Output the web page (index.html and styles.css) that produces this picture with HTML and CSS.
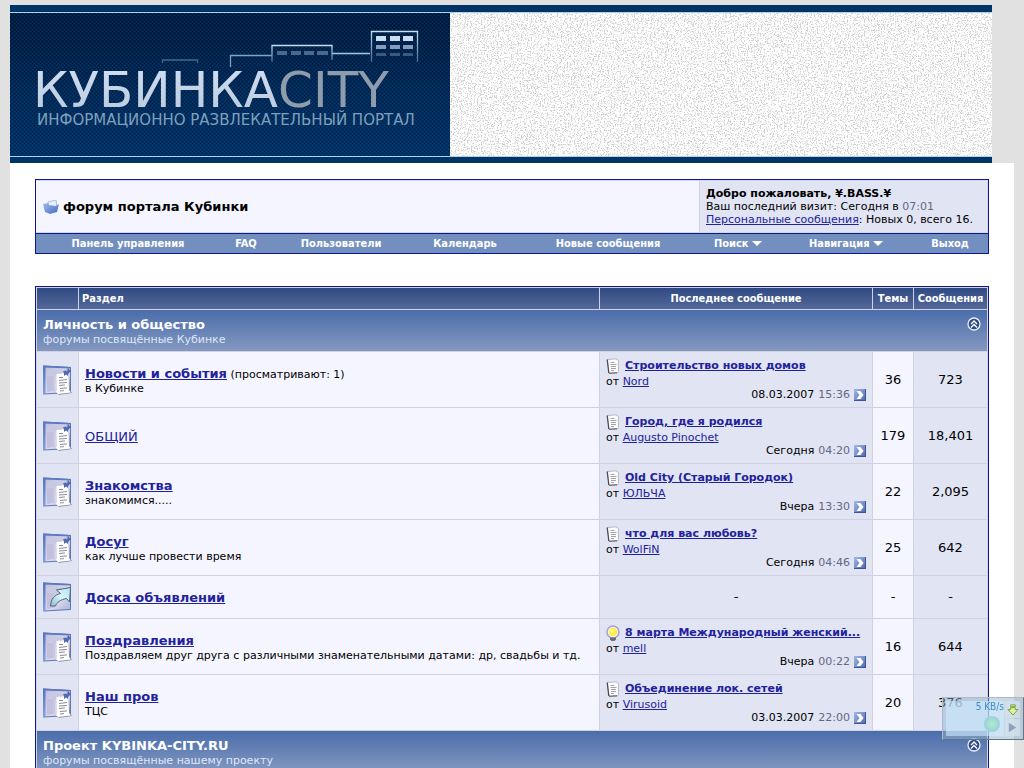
FILE: index.html
```html
<!DOCTYPE html>
<html lang="ru">
<head>
<meta charset="utf-8">
<title>форум портала Кубинки</title>
<link rel="stylesheet" href="styles.css">
</head>
<body>
<svg class="sprite" aria-hidden="true">
  <defs>
    <linearGradient id="board" x1="0" y1="0" x2="1" y2="1"><stop offset="0" stop-color="#b9bddd"/><stop offset=".6" stop-color="#dcd9ec"/><stop offset="1" stop-color="#a9b4dc"/></linearGradient>
    <linearGradient id="edge" x1="0" y1="0" x2="0" y2="1"><stop offset="0" stop-color="#5373bd"/><stop offset="1" stop-color="#86a2dc"/></linearGradient>
    <linearGradient id="arrow" x1="0" y1="1" x2="1" y2="0"><stop offset="0" stop-color="#8fb9c9"/><stop offset=".5" stop-color="#d5f4fb"/><stop offset="1" stop-color="#b4e4f2"/></linearGradient>
    <linearGradient id="go" x1="0" y1="0" x2="1" y2="1"><stop offset="0" stop-color="#a4b8e4"/><stop offset="1" stop-color="#4a67ae"/></linearGradient>
    <linearGradient id="fold" x1="0" y1="0" x2="1" y2="1"><stop offset="0" stop-color="#9dbcf2"/><stop offset="1" stop-color="#4668bd"/></linearGradient>
  </defs>
  <symbol id="i-base" viewBox="0 0 30 30">
    <path d="M1.500 1 28.500 2.500V27.500L1.500 29z" fill="url(#board)" stroke="#5b76bb"/>
    <path d="M1 .5 3.500 1V29L1 29.500z" fill="url(#edge)"/>
    <path d="M1 .5 29 2v1.500L1 2.500z" fill="#5e79c1"/>
    <path d="M5 11h6v15l-6 1z" fill="#c3c0de"/><path d="M5 5l22 1v5H13v15h-2V10H5z" fill="#c9c8e2"/>
  </symbol>
  <symbol id="i-forum" viewBox="0 0 30 30">
    <use href="#i-base"/>
    <path d="M27 10l1 15 2 3-14 2 1-1z" fill="#8a8c9c"/>
    <path d="M14.500 9 26.500 8l.5 17 2 2.500-13 1.500-2-2 1-2z" fill="#fff"/>
    <path d="M17 12.500h4M17 15.500l8-1M17 18l8-.6M17 20.500l6-.6M18 23.500l7-.6M18 26l4-.4" stroke="#8a8a96" fill="none"/>
    <path d="M21 6l3-.5L26 3l3 3-2.500 2.500-.5 2.500-2-1.500-2 1.500v-3z" fill="#5169b0"/><path d="M24 6l2-1.500" stroke="#b6c4ee"/>
  </symbol>
  <symbol id="i-link" viewBox="0 0 30 30">
    <use href="#i-base"/>
    <path d="M8.500 24C9 17 12 13 18.500 11.500L14.500 8 28.500 5.500 27.500 20 24.500 16.500C18 18 15 20 13.500 24z" fill="url(#arrow)" stroke="#50647e"/>
  </symbol>
  <symbol id="i-note" viewBox="0 0 14 16">
    <path d="M1.500 1.500 10 .8l2.500 1.700v11L11.500 15l-8.500.5z" fill="#fafafa" stroke="#b8bac2"/>
    <path d="M1.200 1.500l1.600 13.500" stroke="#48484e" stroke-width="1.200"/><path d="M3 15.200l8-.4" stroke="#50505a"/>
    <path d="M4.500 4.500h4M4.500 6.500h6M5 8.500h5M5 10.500h5M5 12.500h3" stroke="#a4a4ae"/>
  </symbol>
  <symbol id="i-bulb" viewBox="0 0 14 16">
    <circle cx="7" cy="7" r="6" fill="#f4f4fc" stroke="#a4a2c6" stroke-width="1.500"/>
    <circle cx="7" cy="7" r="4.200" fill="#ffef3c"/><circle cx="6" cy="6" r="2" fill="#fff78c"/>
    <path d="M4 12.500h6v2L8.500 16h-3L4 14.500z" fill="#6c6c80"/>
  </symbol>
  <symbol id="i-go" viewBox="0 0 12 12">
    <path d="M0 0h12v12H0z" fill="url(#go)"/><path d="M0 11.500h12M11.500 0v12" stroke="#3c549c"/>
    <path d="M2.500 2h4L9.500 6l-3 4h-4L5.500 6z" fill="#fff"/>
  </symbol>
  <symbol id="i-up" viewBox="0 0 14 14">
    <circle cx="7" cy="7" r="6" fill="#2c4a80" stroke="#e8effc" stroke-width="1.300"/>
    <path d="M4 7l3-3 3 3M4 10.500l3-3 3 3" fill="none" stroke="#fff" stroke-width="1.400"/>
  </symbol>
</svg>

<header class="banner">
  <svg class="logo" viewBox="0 0 440 143" role="img" aria-label="КубинкаCity">
    <defs>
      <linearGradient id="sky" x1="0" y1="0" x2="0" y2="1"><stop offset="0" stop-color="#001c40"/><stop offset=".6" stop-color="#002c5c"/><stop offset="1" stop-color="#00336a"/></linearGradient>
      <pattern id="mesh" width="4" height="4" patternUnits="userSpaceOnUse"><path d="M0 0h1v1H0zM2 2h1v1H2z" fill="#000f28"/><path d="M2 0h1v1H2zM0 2h1v1H0z" fill="#103f72"/></pattern>
      <linearGradient id="fade" x1="0" y1="0" x2="0" y2="1"><stop offset="0" stop-color="#bfe2f5"/><stop offset="1" stop-color="#40678f"/></linearGradient>
      <linearGradient id="metal" x1="0" y1="0" x2="0" y2="1"><stop offset="0" stop-color="#d4e0f2"/><stop offset="1" stop-color="#b7c8dc"/></linearGradient>
    </defs>
    <path d="M0 0h440v143H0z" fill="url(#sky)"/><path d="M0 0h440v143H0z" fill="url(#mesh)" opacity=".6"/>
    <g fill="none" stroke-width="1.300">
      <path d="M152.500 50v-3h35v3" stroke="#3e6890"/>
      <path d="M220.500 54V42.500H262" stroke="#7aa6c4"/>
      <path d="M262 49V32.500h60V47" stroke="url(#fade)"/>
      <path d="M322 40.500h38" stroke="#a4c9df"/>
      <path d="M361.500 49V18.500h46V49" stroke="url(#fade)"/>
    </g>
    <path d="M267 38h10v4h-10zM281 38h10v4h-10zM294 38h10v4h-10zM307 38h11v4h-11z" fill="#49698f"/>
    <path d="M366 23h10v5h-10zM380 23h10v5h-10zM393 23h10v5h-10z" fill="#c9def0"/>
    <path d="M366 32h10v4h-10zM380 32h10v4h-10zM393 32h10v4h-10z" fill="#849dbe"/>
    <path d="M366 40h10v3h-10zM380 40h10v3h-10zM393 40h10v3h-10z" fill="#3c5a80"/>
    <text class="logo-name" x="23" y="94"><tspan fill="url(#metal)">КУБИНКА</tspan><tspan fill="#8e9cab">CITY</tspan></text>
    <text class="logo-tag" x="27" y="112">ИНФОРМАЦИОННО РАЗВЛЕКАТЕЛЬНЫЙ ПОРТАЛ</text>
  </svg>
  <svg class="grain" aria-hidden="true">
    <filter id="noise" x="0" y="0" width="100%" height="100%">
      <feTurbulence type="fractalNoise" baseFrequency=".7" numOctaves="3" seed="4"/>
      <feColorMatrix values="0 0 0 0 .64  0 0 0 0 .64  0 0 0 0 .64  0 0 0 6 -3"/>
    </filter>
    <rect width="100%" height="100%" filter="url(#noise)"/>
  </svg>
</header>

<main class="page">
  <section class="box">
    <div class="top">
      <div class="crumb">
        <svg width="16" height="14" viewBox="0 0 16 14" aria-hidden="true"><path d="M5 2l8-2 1 9-8 2z" fill="#eaf1ff" stroke="#a9bbe4"/><path d="M0 4l5-1 1 2 7 1 3-2-2 8-7 2-5-2z" fill="url(#fold)"/></svg>
        <h1>форум портала Кубинки</h1>
      </div>
      <div class="welcome">
        <strong>Добро пожаловать, ¥.BASS.¥</strong>
        <div>Ваш последний визит: Сегодня в <span class="time">07:01</span></div>
        <div><a href="#pm">Персональные сообщения</a>: Новых 0, всего 16.</div>
      </div>
    </div>
    <nav class="menu">
      <a href="#cp">Панель управления</a><a href="#faq">FAQ</a><a href="#users">Пользователи</a><a href="#cal">Календарь</a><a href="#new">Новые сообщения</a><a href="#search">Поиск <i class="caret"></i></a><a href="#nav">Навигация <i class="caret"></i></a><a href="#exit">Выход</a>
    </nav>
  </section>

  <table class="forums">
    <colgroup><col class="c-icon"><col><col class="c-last"><col class="c-topics"><col class="c-posts"></colgroup>
    <thead><tr><th></th><th class="left">Раздел</th><th>Последнее сообщение</th><th>Темы</th><th>Сообщения</th></tr></thead>
    <tbody>
      <tr><td class="cat" colspan="5"><div class="cat-row"><div><a href="#c1">Личность и общество</a><p>форумы посвящённые Кубинке</p></div><button aria-label="Свернуть"><svg><use href="#i-up"/></svg></button></div></td></tr>
      <tr>
        <td class="icon"><svg><use href="#i-forum"/></svg></td>
        <td class="forum"><a href="#f1">Новости и события</a> <span>(просматривают: 1)</span><p>в Кубинке</p></td>
        <td class="last"><div class="topic"><svg><use href="#i-note"/></svg><a href="#t1">Строительство новых домов</a></div><p>от <a href="#u1">Nord</a></p><p class="when">08.03.2007 <span class="time">15:36</span><a href="#l1" aria-label="К последнему"><svg><use href="#i-go"/></svg></a></p></td>
        <td class="num">36</td><td class="num alt">723</td>
      </tr>
      <tr>
        <td class="icon"><svg><use href="#i-forum"/></svg></td>
        <td class="forum"><a class="plain" href="#f2">ОБЩИЙ</a></td>
        <td class="last"><div class="topic"><svg><use href="#i-note"/></svg><a href="#t2">Город, где я родился</a></div><p>от <a href="#u2">Augusto Pinochet</a></p><p class="when">Сегодня <span class="time">04:20</span><a href="#l2" aria-label="К последнему"><svg><use href="#i-go"/></svg></a></p></td>
        <td class="num">179</td><td class="num alt">18,401</td>
      </tr>
      <tr>
        <td class="icon"><svg><use href="#i-forum"/></svg></td>
        <td class="forum"><a href="#f3">Знакомства</a><p>знакомимся.....</p></td>
        <td class="last"><div class="topic"><svg><use href="#i-note"/></svg><a href="#t3">Old City (Старый Городок)</a></div><p>от <a href="#u3">ЮЛЬЧА</a></p><p class="when">Вчера <span class="time">13:30</span><a href="#l3" aria-label="К последнему"><svg><use href="#i-go"/></svg></a></p></td>
        <td class="num">22</td><td class="num alt">2,095</td>
      </tr>
      <tr>
        <td class="icon"><svg><use href="#i-forum"/></svg></td>
        <td class="forum"><a href="#f4">Досуг</a><p>как лучше провести время</p></td>
        <td class="last"><div class="topic"><svg><use href="#i-note"/></svg><a href="#t4">что для вас любовь?</a></div><p>от <a href="#u4">WolFiN</a></p><p class="when">Сегодня <span class="time">04:46</span><a href="#l4" aria-label="К последнему"><svg><use href="#i-go"/></svg></a></p></td>
        <td class="num">25</td><td class="num alt">642</td>
      </tr>
      <tr>
        <td class="icon"><svg><use href="#i-link"/></svg></td>
        <td class="forum"><a href="#f5">Доска объявлений</a></td>
        <td class="num alt">-</td><td class="num">-</td><td class="num alt">-</td>
      </tr>
      <tr>
        <td class="icon"><svg><use href="#i-forum"/></svg></td>
        <td class="forum"><a href="#f6">Поздравления</a><p>Поздравляем друг друга с различными знаменательными датами: др, свадьбы и тд.</p></td>
        <td class="last"><div class="topic"><svg><use href="#i-bulb"/></svg><a href="#t6">8 марта Международный женский...</a></div><p>от <a href="#u6">mell</a></p><p class="when">Вчера <span class="time">00:22</span><a href="#l6" aria-label="К последнему"><svg><use href="#i-go"/></svg></a></p></td>
        <td class="num">16</td><td class="num alt">644</td>
      </tr>
      <tr>
        <td class="icon"><svg><use href="#i-forum"/></svg></td>
        <td class="forum"><a href="#f7">Наш пров</a><p>ТЦС</p></td>
        <td class="last"><div class="topic"><svg><use href="#i-note"/></svg><a href="#t7">Объединение лок. сетей</a></div><p>от <a href="#u7">Virusoid</a></p><p class="when">03.03.2007 <span class="time">22:00</span><a href="#l7" aria-label="К последнему"><svg><use href="#i-go"/></svg></a></p></td>
        <td class="num">20</td><td class="num alt">376</td>
      </tr>
      <tr><td class="cat" colspan="5"><div class="cat-row"><div><a href="#c2">Проект KYBINKA-CITY.RU</a><p>форумы посвящённые нашему проекту</p></div><button aria-label="Свернуть"><svg><use href="#i-up"/></svg></button></div></td></tr>
    </tbody>
  </table>
</main>

<aside class="meter">
  <div class="screen"><span>5 KB/s</span><i class="orb"></i></div>
  <div class="keys">
    <button aria-label="Загрузки"><svg viewBox="0 0 14 16"><path d="M5 3h5v2H5zM5 6h5v2h3l-5.500 6L2 8h3z" fill="#e2ee9c" stroke="#72a03c"/></svg></button>
    <button aria-label="Пуск"><svg viewBox="0 0 14 16"><path d="M3 3l8 5-8 5z" fill="#8ea2b8"/></svg></button>
  </div>
</aside>
</body>
</html>
```
FILE: styles.css
```css
* { box-sizing: border-box; }
html { height: 100%; overflow: hidden; background: #e1e1e1; }
body {
  height: 100%;
  margin: 0;
  padding: 5px 10px 0;
  overflow: hidden;
  font: 11px/13px "DejaVu Sans", sans-serif;
  color: #000;
}
p, h1 { margin: 0; font-size: inherit; }
a { color: #22229c; }
button { padding: 0; border: 0; background: none; }
svg { display: block; }
.sprite { position: absolute; width: 0; height: 0; }
.time { color: #666686; }

.banner {
  display: flex;
  margin-right: 22px;
  border: solid #003366;
  border-width: 7px 0 6px;
  background: #fff;
  box-shadow: inset 0 1px #a8d4ee, inset 0 -1px #a8d4ee;
  padding: 1px 0;
}
.logo { flex: none; width: 440px; height: 143px; }
.logo-name { font: 50px "DejaVu Sans", sans-serif; }
.logo-tag { font: 15px "DejaVu Sans", sans-serif; fill: #7fa0bd; }
.grain { flex: 1; min-width: 0; height: 143px; }

.page { padding: 16px 25px 0; background: #fff; }
.box { border: 1px solid #0b198c; background: #d1d1e1; }
.top { display: flex; gap: 1px; border: 1px solid #d1d9f1; border-width: 1px 1px 1px 0; }
.crumb { flex: 1; display: flex; align-items: center; gap: 4px; padding: 0 7px; background: #f5f5ff; }
.crumb h1 { font-size: 13px; line-height: 16px; }
.welcome { min-width: 287px; padding: 6px; background: #e1e4f2; white-space: nowrap; }
.menu {
  display: grid;
  grid-template-columns: 184fr 52fr 138fr 110fr 176fr 84fr 132fr 76fr;
  border-top: 1px solid #0b198c;
  background: #738fbf;
  line-height: 19px;
  text-align: center;
}
.menu a, th { color: #fff; font-family: "DejaVu Sans Condensed", "DejaVu Sans", sans-serif; font-weight: bold; text-decoration: none; white-space: nowrap; }
.caret { display: inline-block; border: solid transparent; border-width: 5px 5px 0; border-top-color: #fff; vertical-align: 1px; }

.forums { width: 100%; margin-top: 32px; border: 1px solid #0b198c; border-spacing: 1px; background: #d1d1e1; table-layout: fixed; }
.c-icon { width: 41px; }
.c-last { width: 272px; }
.c-topics { width: 40px; }
.c-posts { width: 73px; }
th { height: 21px; padding: 0; background: linear-gradient(#2f4a82, #54689a); }
.left { padding-left: 3px; text-align: left; }
td { padding: 6px; background: #f5f5ff; }
.cat { padding: 7px 6px 5px; background: linear-gradient(#4a6dab, #8498c0); color: #dfe8f8; }
.cat-row { display: flex; justify-content: space-between; align-items: flex-start; }
.cat a { color: #fff; font-size: 13px; line-height: 16px; font-weight: bold; text-decoration: none; }
.cat svg { width: 14px; height: 14px; }
.icon, .last, .alt { background: #e1e4f2; }
.icon svg { width: 30px; height: 30px; }
.icon { padding: 6px 5px; }
.forum { padding: 7px 6px 5px; }
.forum > a { font-size: 13px; line-height: 16px; font-weight: bold; }
.forum > .plain { font-weight: normal; }
.last { padding: 5px 6px 6px; white-space: nowrap; }
.topic { display: flex; align-items: center; gap: 5px; height: 17px; margin-bottom: 1px; font-weight: bold; }
.topic svg { width: 14px; height: 16px; }
.when { display: flex; justify-content: flex-end; align-items: center; gap: 4px; }
.when svg { width: 12px; height: 12px; }
.num { text-align: center; font-size: 13px; line-height: 16px; }

.meter {
  position: fixed;
  right: 0;
  bottom: 28px;
  display: flex;
  gap: 1px;
  width: 82px;
  height: 43px;
  padding: 3px;
  border: 1px solid #75899e;
  border-color: #a9bccb #62758c #62758c #a9bccb;
  background: rgba(150, 177, 200, .5);
  color: #3c8cc4;
}
.screen { flex: 1; background: rgba(206, 236, 255, .6); text-align: right; font: 10px/12px "DejaVu Sans Condensed", sans-serif; }
.orb { display: block; width: 16px; height: 16px; margin: 3px 4px 0 auto; border-radius: 50%; background: radial-gradient(#b4ecc8, #96cee2 75%); }
.keys { display: grid; gap: 1px; }
.keys button { display: grid; place-items: center; width: 15px; background: rgba(214, 226, 240, .7); }
.keys svg { width: 13px; height: 15px; }
```
